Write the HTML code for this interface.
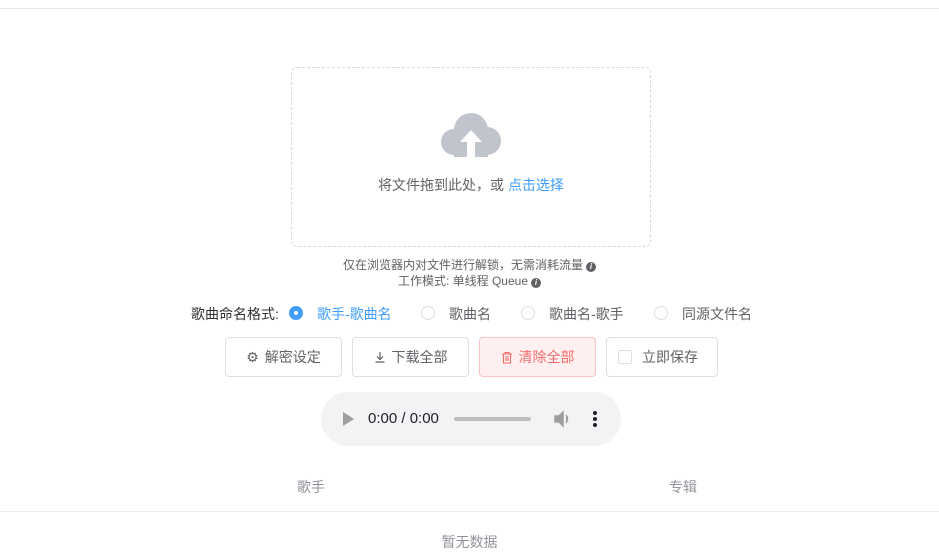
<!DOCTYPE html>
<html><head><meta charset="utf-8"><style>
*{box-sizing:border-box;margin:0;padding:0}
body{width:939px;height:556px;background:#fff;font-family:"Liberation Sans","Noto Sans CJK SC",sans-serif;color:#606266;position:relative;overflow:hidden;font-size:14px}
.abs{position:absolute}
.drop{left:291px;top:67px;width:360px;height:180px;border:1px dashed #d9d9d9;border-radius:6px}
.btn{position:absolute;top:337px;height:40px;border:1px solid #dcdfe6;border-radius:4px;font-size:14px;color:#606266;display:flex;align-items:center;justify-content:center;gap:6px}
.radio{position:absolute;top:306px;width:14px;height:14px;border:1px solid #dcdfe6;border-radius:50%}
.rl{position:absolute;top:304px;font-size:14px;color:#606266}
.info{display:inline-block;width:10px;height:10px;border-radius:50%;background:#606266;color:#fff;font-size:8px;line-height:10px;text-align:center;font-style:italic;font-weight:bold;vertical-align:0px;margin-left:3px}
</style></head><body>
<div class="abs" style="left:0;top:8px;width:939px;height:1px;background:#e4e7ed"></div>
<div class="abs drop"></div>
<svg class="abs" style="left:441px;top:111px" width="60" height="46" viewBox="0 0 60 46">
<circle cx="30" cy="19" r="17" fill="#c0c4cc"/>
<circle cx="13" cy="31" r="13" fill="#c0c4cc"/>
<circle cx="46" cy="30" r="14" fill="#c0c4cc"/>
<rect x="13" y="28" width="34" height="18" fill="#c0c4cc"/>
<path d="M30 19 L19 31 L26 31 L26 46 L34 46 L34 31 L41 31 Z" fill="#fff"/>
</svg>
<div class="abs" style="left:291px;width:360px;top:175px;text-align:center;font-size:14px">将文件拖到此处，或 <span style="color:#409eff">点击选择</span></div>
<div class="abs" style="left:0;width:939px;top:257px;text-align:center;font-size:12px;line-height:16px">仅在浏览器内对文件进行解锁，无需消耗流量<span class="info">i</span><br>工作模式: 单线程 Queue<span class="info">i</span></div>
<div class="rl" style="left:191px;color:#303133">歌曲命名格式:</div>
<div class="radio" style="left:289px;background:#409eff;border-color:#409eff"><div style="width:4px;height:4px;background:#fff;border-radius:50%;margin:4px"></div></div>
<div class="rl" style="left:317px;color:#409eff">歌手-歌曲名</div>
<div class="radio" style="left:421px"></div><div class="rl" style="left:449px">歌曲名</div>
<div class="radio" style="left:521px"></div><div class="rl" style="left:549px">歌曲名-歌手</div>
<div class="radio" style="left:654px"></div><div class="rl" style="left:682px">同源文件名</div>
<div class="btn" style="left:225px;width:117px"><span style="font-size:14px;color:#606266">⚙</span>解密设定</div>
<div class="btn" style="left:352px;width:117px"><svg width="12" height="12" viewBox="0 0 12 12"><path d="M6 1V8M3 5.5L6 8.5L9 5.5M1.5 11H10.5" stroke="#606266" stroke-width="1.2" fill="none"/></svg>下载全部</div>
<div class="btn" style="left:479px;width:117px;background:#fef0f0;border-color:#fbc4c4;color:#f56c6c"><svg width="12" height="13" viewBox="0 0 12 13"><path d="M1 3H11M4 3V1.5H8V3M2.5 3V12H9.5V3M5 5V10M7 5V10" stroke="#f56c6c" stroke-width="1.1" fill="none"/></svg>清除全部</div>
<div class="btn" style="left:606px;width:112px;justify-content:flex-start;padding-left:11px;gap:0"><span style="width:14px;height:14px;border:1px solid #dcdfe6;border-radius:2px;display:inline-block;margin-right:10px"></span>立即保存</div>
<div class="abs" style="left:321px;top:392px;width:300px;height:54px;border-radius:27px;background:#f1f3f4"></div>
<svg class="abs" style="left:343px;top:412px" width="12" height="14"><path d="M0 0L11 7L0 14Z" fill="#9e9e9e"/></svg>
<div class="abs" style="left:368px;top:410px;font-size:15px;color:#202124">0:00 / 0:00</div>
<div class="abs" style="left:454px;top:417px;width:77px;height:4px;border-radius:2px;background:#bdbdbd"></div>
<svg class="abs" style="left:554px;top:410px" width="18" height="18" viewBox="0 0 18 18"><path d="M1 6H5L9 2V16L5 12H1Z M12 5Q15 9 12 13" fill="#9e9e9e" stroke="#9e9e9e" stroke-width="1.5"/></svg>
<div class="abs" style="left:593px;top:411px;width:4px;height:4px;border-radius:2px;background:#202124;box-shadow:0 6px #202124,0 12px #202124"></div>
<div class="abs" style="left:297px;top:477px;font-size:14px;color:#909399">歌手</div>
<div class="abs" style="left:669px;top:477px;font-size:14px;color:#909399">专辑</div>
<div class="abs" style="left:0;top:511px;width:939px;height:1px;background:#ebeef5"></div>
<div class="abs" style="left:0;width:939px;top:532px;text-align:center;font-size:14px;color:#909399">暂无数据</div>
</body></html>
